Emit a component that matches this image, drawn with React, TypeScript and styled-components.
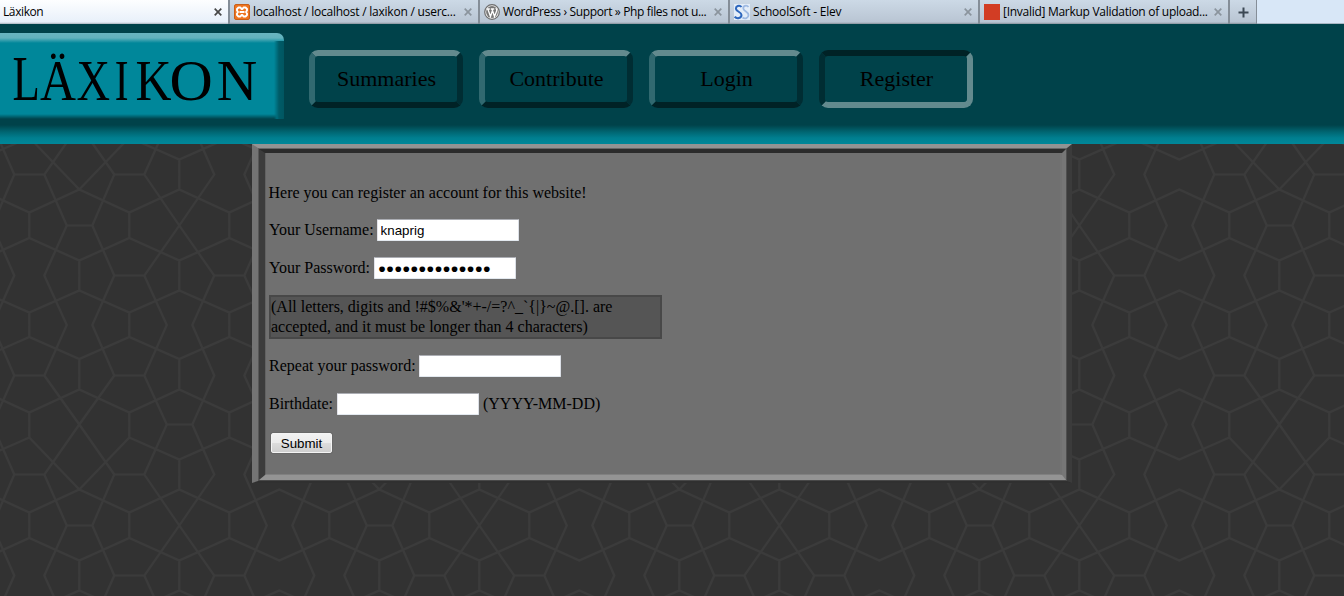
import React from "react";
import styled, { createGlobalStyle, css } from "styled-components";

const patternPath = [
  "M-21 189L29 212L79 189L129 212L179 189L229 212L279 189L329 212",
  "M-21 260L29 237.5L79 260L129 237.5L179 260L229 237.5L279 260L329 237.5",
  "M-21 290L29 312L79 290L129 312L179 290L229 312L279 290L329 312",
  "M-21 -10L29 12L79 -10L129 12L179 -10L229 12L279 -10L329 12",
  "M-21 58.5L29 36.5L79 58.5L129 36.5L179 58.5L229 36.5L279 58.5L329 36.5",
  "M-21 89L29 112L79 89L129 112L179 89L229 112L279 89L329 112",
  "M-21 159L29 137L79 189L129 137L179 159L229 137L279 159L329 137",
  "M29 12V36.5M129 12V36.5M229 12V36.5M79 58.5V89M179 58.5V89",
  "M29 112V137M129 112V137M229 112V137M179 159V189",
  "M29 212V237.5M129 212V237.5M229 212V237.5M79 260V290M179 260V290",
  "M14 -25L-8 24.5L14 75L-8 124L14 174L-8 225L14 275L-8 324.5",
  "M314 -25L292 24.5L314 75L292 124L314 174L292 225L314 275L292 324.5",
  "M44 -25L66.5 24.5L44 75L79 124L114 174L92 225L114 275L92 324.5",
  "M114 -25L92 24.5L114 75L79 124L44 174L66.5 225L44 275L66.5 324.5",
  "M144 -25L166.5 24.5L144 75L166.5 124L144 174L179 225L214 275L192 324.5",
  "M214 -25L192 24.5L214 75L192 124L214 174L179 225L144 275L166.5 324.5",
  "M244 -25L266.5 24.5L244 75L266.5 124L244 174L266.5 225L244 275L266.5 324.5",
  "M14 75H44M114 75H144M14 174H44M114 174H144M66.5 225H92M114 275H144M214 275H244M166.5 124H192",
].join("");

const patternUrl = `data:image/svg+xml,${encodeURIComponent(
  `<svg xmlns="http://www.w3.org/2000/svg" width="300" height="300"><rect width="300" height="300" fill="#323232"/><path d="${patternPath}" transform="translate(.3 .5)" fill="none" stroke="#3b3b3b" stroke-width="2.2"/></svg>`
)}`;

const GlobalStyle = createGlobalStyle`
  * { box-sizing: border-box; }
  body {
    margin: 0;
    height: 596px;
    overflow: hidden;
    font: 16px/20px "Liberation Serif", "Times New Roman", serif;
    color: #000;
    background: #323232 url("${patternUrl}") 0 0;
  }
`;

const TabBar = styled.div`
  display: flex;
  height: 24px;
  background: linear-gradient(#d8e7f7 23px, #a9b7c4 23px);
`;

const Tab = styled.div<{ $active?: boolean; $spacing: number }>`
  display: flex;
  align-items: center;
  flex: none;
  width: ${(p) => (p.$active ? 228 : 250)}px;
  height: 24px;
  padding: 0 5px 0 ${(p) => (p.$active ? 3 : 4)}px;
  border-left: ${(p) => (p.$active ? "0" : "2px solid #858e98")};
  background: ${(p) =>
    p.$active
      ? "linear-gradient(#fdfeff, #e8f0fa 92%, #a9b3bd)"
      : "linear-gradient(#ccd9e6, #b9c5d3 92%, #87919b)"};
  font: 12px/16px "Open Sans", "Noto Sans", sans-serif;
  letter-spacing: ${(p) => p.$spacing}px;
  white-space: nowrap;
`;

const TabIcon = styled.svg`
  width: 16px;
  height: 16px;
  margin-right: 3px;
  flex: none;
`;

const TabTitle = styled.span`
  flex: 1;
`;

const CloseIcon = styled.svg<{ $active?: boolean }>`
  width: 8px;
  height: 8px;
  margin-right: 1px;
  flex: none;
  fill: none;
  stroke: ${(p) => (p.$active ? "#484848" : "#8b949d")};
  stroke-width: 1.7;
`;

const NewTab = styled.div`
  display: flex;
  align-items: center;
  justify-content: center;
  width: 29px;
  height: 24px;
  border: solid #858e98;
  border-width: 0 1px 0 2px;
  background: linear-gradient(#ccd9e6, #b9c5d3 92%, #87919b);
`;

const Header = styled.header`
  display: flex;
  height: 120px;
  background: linear-gradient(#00424a 0, #00424a 101px, #006672 108px, #007f90 114px, #008799 120px);
`;

const LogoBox = styled.div`
  width: 284px;
  height: 89px;
  margin-top: 9px;
  border-radius: 0 7px 4px 0;
  background:
    linear-gradient(90deg, transparent 274px, #006d7c 277px, #005b67 279px, #005661 284px) 0 8px / 100% 78px no-repeat,
    linear-gradient(#69b5c0 0, #62b2bd 5px, #00879a 10px, #00879a 81px, #00424a 86px);
`;

const Nav = styled.nav`
  display: flex;
  gap: 16px;
  margin: 26px 0 0 25px;
`;

const raised = css`
  border-color: #638a8e #002d33 #002226 #316970;
`;
const sunken = css`
  border-color: #002226 #638a8e #638a8e #002d33;
`;

const NavButton = styled.a<{ $pressed?: boolean }>`
  display: flex;
  align-items: center;
  justify-content: center;
  width: 154px;
  height: 58px;
  padding-left: 1px;
  border: 6px solid;
  border-radius: 9px;
  font-size: 22px;
  ${(p) => (p.$pressed ? sunken : raised)}
`;

const Frame = styled.div<{ $widths: string; $colors: string }>`
  height: 100%;
  border-style: solid;
  border-width: ${(p) => p.$widths};
  border-color: ${(p) => p.$colors};
`;

const Panel = styled.main`
  width: 820px;
  height: 339px;
  margin-left: 252px;
  background: #707070;
`;

const Form = styled.form`
  display: flex;
  flex-direction: column;
  align-items: flex-start;
  gap: 16px;
  padding: 30px 0 0 3px;
`;

const Intro = styled.p`
  margin: 0 0 0 -0.5px;
`;

const Field = styled.label<{ $gap?: number }>`
  display: flex;
  align-items: center;
  gap: ${(p) => p.$gap ?? 4}px;
  height: 22px;
`;

const Input = styled.input`
  width: 142px;
  height: 22px;
  padding: 1px 3px;
  border: 1px solid;
  border-color: #abadb3 #dbdfe6 #e3e9ef #e2e3ea;
  border-radius: 1px;
  background: #fff;
  color: #000;
  font: 13.33px "Liberation Sans", Arial, sans-serif;
  outline: 0;
`;

const Hint = styled.div`
  width: 393px;
  height: 44px;
  border: 2px solid #484848;
  background: #555;
  white-space: nowrap;
`;

const Submit = styled.button`
  width: 61px;
  height: 20px;
  margin: 2px 0 0 2px;
  padding: 0;
  border: 1px solid #f4f4f4;
  border-radius: 2px;
  background: linear-gradient(#f2f2f2 0, #ebebeb 48%, #ddd 50%, #cfcfcf);
  box-shadow: 0 0 0 1px #686868;
  color: #000;
  font: 13.33px "Liberation Sans", Arial, sans-serif;
`;

const Close = ({ active }: { active?: boolean }) => (
  <CloseIcon $active={active} viewBox="0 0 8 8">
    <path d="M.7.7l6.6 6.6M7.3.7L.7 7.3" />
  </CloseIcon>
);

const logoLetters = [
  { char: "L", x: 12.6, stretch: 0.7, size: 64 },
  { char: "Ä", x: 40, stretch: 0.89, size: 56 },
  { char: "X", x: 76.5, stretch: 0.83, size: 56 },
  { char: "I", x: 114.7, stretch: 0.74, size: 56 },
  { char: "K", x: 135.4, stretch: 0.89, size: 56 },
  { char: "O", x: 169.6, stretch: 1.07, size: 56 },
  { char: "N", x: 216.8, stretch: 1, size: 56 },
];

const Logo = () => (
  <svg width="270" height="80" viewBox="0 0 270 80">
    {logoLetters.map((l) => (
      <text
        key={l.char}
        transform={`translate(${l.x} 67) scale(${l.stretch} 1)`}
        fontFamily="Liberation Serif, Times New Roman, serif"
        fontSize={l.size}
      >
        {l.char}
      </text>
    ))}
  </svg>
);

export default function App() {
  return (
    <>
      <GlobalStyle />
      <TabBar>
        <Tab $active $spacing={-0.4}>
          <TabTitle>Läxikon</TabTitle>
          <Close active />
        </Tab>
        <Tab $spacing={-0.23}>
          <TabIcon viewBox="0 0 16 16">
            <rect x=".5" y=".5" width="15" height="15" rx="1.5" fill="#ee7420" stroke="#c85f18" />
            <path
              d="M4.500 3.500h2l1 1.500h1l1-1.500h2l1.500 1.500v1.500L12 8l1 1.500V11l-1.500 1.500h-2L8.500 11h-1l-1 1.500h-2L3 11V9.500L4 8 3 6.500V5zM5.500 8h5"
              fill="none"
              stroke="#fff"
              strokeWidth="1.9"
              strokeLinejoin="round"
            />
          </TabIcon>
          <TabTitle>localhost / localhost / laxikon / userc...</TabTitle>
          <Close />
        </Tab>
        <Tab $spacing={-0.35}>
          <TabIcon viewBox="0 0 16 16">
            <circle cx="8" cy="8" r="7.3" fill="#f0f0f0" stroke="#6d6d6d" strokeWidth="1.2" />
            <circle cx="8" cy="8" r="5.9" fill="#777" />
            <path
              d="M2.800 5h3M6.800 5h3.400M3.800 5l2.700 7.500L8.300 7M8 5l2.500 7.500L12.600 7c.5-1.500-.3-2-.8-2.800"
              fill="none"
              stroke="#fff"
              strokeWidth="1.3"
            />
          </TabIcon>
          <TabTitle>WordPress › Support » Php files not u...</TabTitle>
          <Close />
        </Tab>
        <Tab $spacing={-0.2}>
          <TabIcon viewBox="0 0 16 16">
            <rect width="16" height="16" fill="#e3edf8" />
            <path
              d="M14.500 3C12.500.5 8.500 2 9.500 5c.8 2.500 5 3 5 6s-3.500 4.500-6 2.500"
              fill="none"
              stroke="#9db9e2"
              strokeWidth="1.8"
            />
            <path
              d="M7.500 3C5.500.5 1.500 2 2 5c.5 2.700 5.500 3 5.500 6S3 15.500.700 12.700"
              fill="none"
              stroke="#2d67bd"
              strokeWidth="2"
            />
          </TabIcon>
          <TabTitle>SchoolSoft - Elev</TabTitle>
          <Close />
        </Tab>
        <Tab $spacing={-0.28}>
          <TabIcon viewBox="0 0 16 16">
            <rect width="16" height="16" fill="#d23d24" />
          </TabIcon>
          <TabTitle>[Invalid] Markup Validation of upload...</TabTitle>
          <Close />
        </Tab>
        <NewTab>
          <svg width="11" height="11" viewBox="0 0 11 11">
            <path d="M5.500.5v10M.5 5.500h10" stroke="#3c4854" strokeWidth="2" />
          </svg>
        </NewTab>
      </TabBar>
      <Header>
        <LogoBox>
          <Logo />
        </LogoBox>
        <Nav>
          <NavButton>Summaries</NavButton>
          <NavButton>Contribute</NavButton>
          <NavButton>Login</NavButton>
          <NavButton $pressed>Register</NavButton>
        </Nav>
      </Header>
      <Panel>
        <Frame $widths="4px 5px 2px 6px" $colors="#939393 #3b3b3b #303030 #747474">
          <Frame $widths="1px 1px 1px 1px" $colors="#666 #505050 #484848 #585858">
            <Frame $widths="4px 4px 5px 6px" $colors="#2b2b2b #777 #949494 #3c3c3c">
              <Frame $widths="0 2px 1px 1px" $colors="#707070 #737373 #808080 #626262">
                <Form>
                  <Intro>Here you can register an account for this website!</Intro>
                  <Field $gap={3}>
                    Your Username: <Input defaultValue="knaprig" />
                  </Field>
                  <Field>
                    Your Password: <Input defaultValue="●●●●●●●●●●●●●●" />
                  </Field>
                  <Hint>
                    (All letters, digits and !#$%&amp;'*+-/=?^_`{"{|}"}~@.[]. are
                    <br />
                    accepted, and it must be longer than 4 characters)
                  </Hint>
                  <Field $gap={3}>
                    Repeat your password: <Input />
                  </Field>
                  <Field>
                    Birthdate: <Input /> (YYYY-MM-DD)
                  </Field>
                  <Submit type="button">Submit</Submit>
                </Form>
              </Frame>
            </Frame>
          </Frame>
        </Frame>
      </Panel>
    </>
  );
}
